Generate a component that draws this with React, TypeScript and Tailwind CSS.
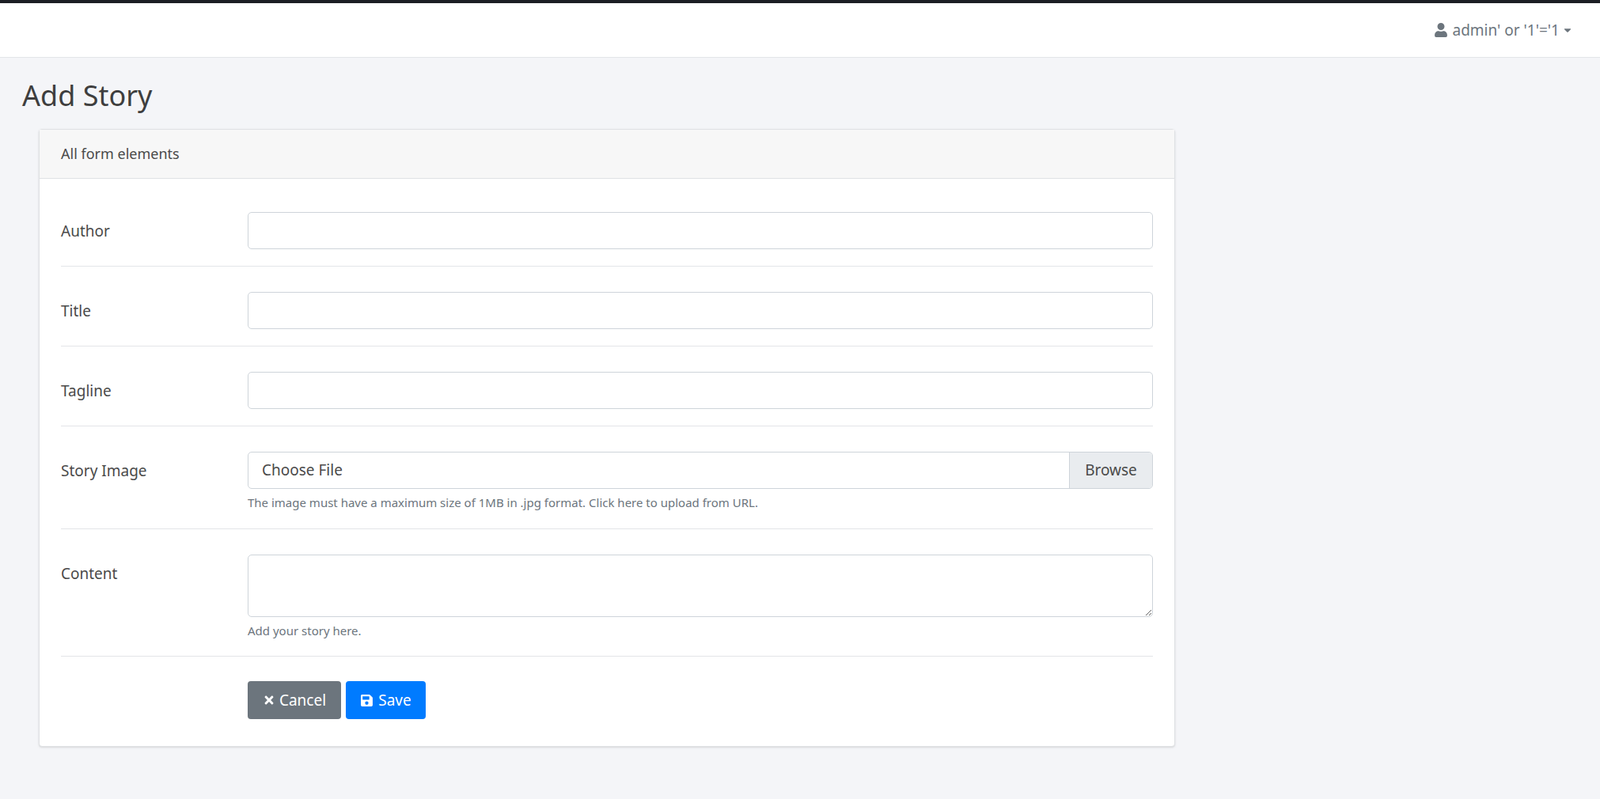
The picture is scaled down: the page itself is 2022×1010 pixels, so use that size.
import { FaUser, FaCaretDown, FaTimes, FaSave } from 'react-icons/fa';

const inputCls = 'h-[47px] w-full rounded-[5px] border border-[#ced4da] bg-white';

function Row({ label, children, last = false }: { label: string; children: React.ReactNode; last?: boolean }) {
  return (
    <div className={`flex pt-[32px] pb-[21px] ${last ? '' : 'border-b border-[#e3e5e8]'}`}>
      <div className="w-[236px] shrink-0 pt-[10px] text-[19px] text-[#4a4a4a]">{label}</div>
      <div className="flex-1">{children}</div>
    </div>
  );
}

export default function App() {
  return (
    <div className="min-h-[1010px] bg-[#f4f5f8] font-['Lato','Noto_Sans',sans-serif]">
      <div className="h-[4px] bg-[#1c1e24]" />
      <header className="flex h-[69px] items-center justify-end border-b border-[#e3e5e8] bg-white pr-[34px] text-[19px] text-[#6c757d]">
        <FaUser className="mr-[6px] text-[18px]" />
        <span>admin' or '1'='1</span>
        <FaCaretDown className="ml-[3px] text-[14px]" />
      </header>
      <h1 className="pl-[28px] pt-[26px] text-[36px] leading-[44px] text-[#3e3e3e]">Add Story</h1>
      <div className="ml-[49px] mt-[20px] w-[1436px] rounded-[4px] border border-[#dfe1e4] bg-white shadow-sm">
        <div className="flex h-[62px] items-center border-b border-[#dfe1e4] bg-[#f7f7f7] px-[27px] text-[18px] text-[#4a4a4a]">
          All form elements
        </div>
        <div className="px-[27px] pb-[34px] pt-[10px]">
          <Row label="Author"><div className={inputCls} /></Row>
          <Row label="Title"><div className={inputCls} /></Row>
          <Row label="Tagline"><div className={inputCls} /></Row>
          <Row label="Story Image">
            <div className={`${inputCls} flex overflow-hidden text-[19px] text-[#4a4a4a]`}>
              <div className="flex flex-1 items-center pl-[17px]">Choose File</div>
              <div className="flex w-[105px] items-center justify-center border-l border-[#ced4da] bg-[#e9ecef]">Browse</div>
            </div>
            <div className="mt-[6px] text-[15px] text-[#6c757d]">
              The image must have a maximum size of 1MB in .jpg format. Click here to upload from URL.
            </div>
          </Row>
          <Row label="Content">
            <textarea className="block h-[79px] w-full resize-y rounded-[5px] border border-[#ced4da]" />
            <div className="mt-[6px] text-[15px] text-[#6c757d]">Add your story here.</div>
          </Row>
          <div className="flex gap-[6px] pl-[236px] pt-[31px]">
            <button className="flex h-[48px] w-[118px] items-center justify-center gap-[5px] rounded-[4px] bg-[#6c757d] text-[19px] text-white">
              <FaTimes className="text-[16px]" />Cancel
            </button>
            <button className="flex h-[48px] w-[101px] items-center justify-center gap-[6px] rounded-[4px] bg-[#007bff] text-[19px] text-white">
              <FaSave className="text-[17px]" />Save
            </button>
          </div>
        </div>
      </div>
    </div>
  );
}
